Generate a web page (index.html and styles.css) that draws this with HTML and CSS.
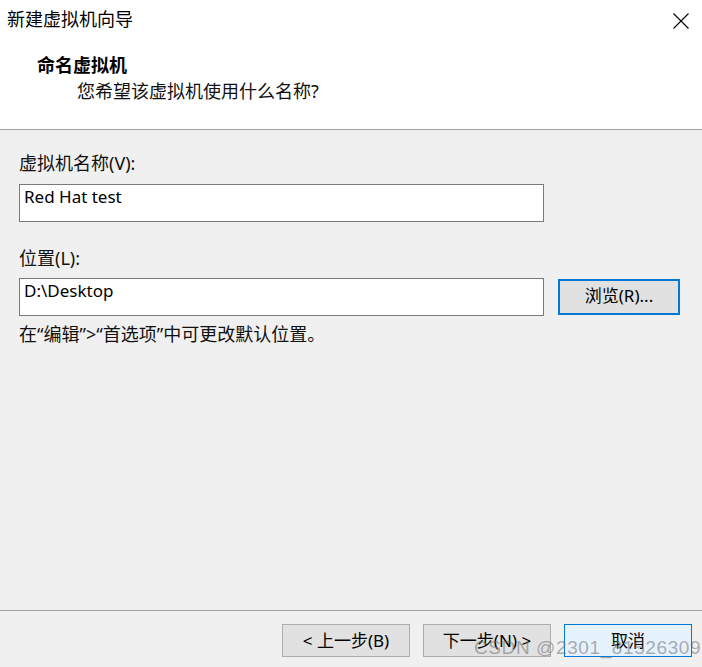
FILE: index.html
```html
<!DOCTYPE html>
<html lang="zh">
<head>
<meta charset="utf-8">
<link rel="stylesheet" href="styles.css">
</head>
<body>
<div class="window">
  <div class="header">
    <div class="titlebar">
      <span class="title">新建虚拟机向导</span>
      <span class="close">
        <svg width="16" height="16" viewBox="0 0 16 16"><path d="M0.5 0.5 L15.5 15.5 M15.5 0.5 L0.5 15.5" stroke="#000" stroke-width="1.1" fill="none"/></svg>
      </span>
    </div>
    <div class="heading">命名虚拟机</div>
    <div class="subheading">您希望该虚拟机使用什么名称?</div>
  </div>
  <div class="content">
    <div class="label">虚拟机名称(V):</div>
    <div class="field">Red Hat test</div>
    <div class="label label2">位置(L):</div>
    <div class="row">
      <div class="field">D:\Desktop</div>
      <div class="btn browse">浏览(R)...</div>
    </div>
    <div class="hint">在“编辑”&gt;“首选项”中可更改默认位置。</div>
  </div>
  <div class="footer">
    <div class="btn nav">&lt; 上一步(B)</div>
    <div class="btn nav">下一步(N) &gt;</div>
    <div class="btn nav cancel">取消</div>
  </div>
  <div class="watermark">CSDN @2301_81526309</div>
</div>
</body>
</html>
```

FILE: styles.css
```css
html, body {
  margin: 0;
  padding: 0;
}
body {
  font-family: "Noto Sans", "Noto Sans CJK SC", sans-serif;
  font-size: 18px;
  color: #000;
  background: #f0f0f0;
}
.window {
  position: relative;
  width: 702px;
  height: 667px;
  display: flex;
  flex-direction: column;
  background: #f0f0f0;
  overflow: hidden;
}
.header {
  background: #fff;
  height: 129px;
  border-bottom: 1px solid #a0a0a0;
  box-sizing: content-box;
}
.titlebar {
  display: flex;
  justify-content: space-between;
  align-items: center;
  padding: 8px 13px 0 7px;
  height: 22px;
  line-height: 22px;
}
.close {
  display: flex;
  margin-top: 3px;
}
.heading {
  margin: 23px 0 0 37px;
  font-weight: bold;
  line-height: 22px;
  font-family: "Noto Sans CJK SC", serif;
}
.subheading {
  margin: 5px 0 0 77px;
  line-height: 22px;
  color: #111;
}
.content {
  flex: 1;
  padding: 22px 0 0 19px;
}
.label {
  line-height: 22px;
  height: 22px;
  color: #111;
}
.label2 {
  margin-top: 25px;
}
.field {
  margin-top: 10px;
  width: 525px;
  border: 1px solid #7a7a7a;
  background: #fff;
  padding: 1px 0 0 4px;
  box-sizing: border-box;
  height: 38px;
  line-height: 22px;
  font-size: 17px;
}
.row {
  display: flex;
  align-items: flex-start;
  margin-top: 9px;
}
.row .field {
  margin-top: 0;
}
.btn {
  display: flex;
  align-items: center;
  justify-content: center;
  box-sizing: border-box;
  background: #e1e1e1;
  border: 1px solid #adadad;
  line-height: 20px;
  font-size: 17px;
}
.browse {
  margin: 1px 0 0 14px;
  width: 122px;
  height: 36px;
  border: 2px solid #0078d7;
  padding-bottom: 2px;
}
.hint {
  margin-top: 7px;
  line-height: 22px;
  color: #111;
}
.footer {
  height: 57px;
  border-top: 1px solid #a0a0a0;
  display: flex;
  justify-content: flex-end;
  align-items: flex-start;
  gap: 13px;
  padding: 13px 10px 0 0;
  box-sizing: border-box;
}
.nav {
  width: 128px;
  height: 33px;
}
.cancel {
  background: #e5f1fb;
  border-color: #0078d7;
}
.watermark {
  position: absolute;
  left: 474px;
  top: 636px;
  font-family: "Liberation Sans", Arial, sans-serif;
  font-size: 19px;
  line-height: 24px;
  color: rgba(110, 110, 110, 0.55);
  letter-spacing: 0.6px;
  white-space: nowrap;
}
```
